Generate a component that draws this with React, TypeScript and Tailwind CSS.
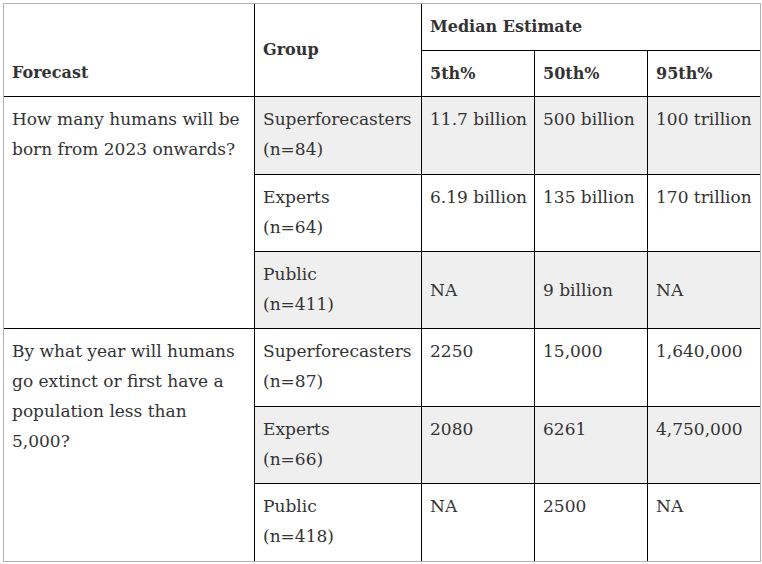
import React from "react";

const font = { fontFamily: '"DejaVu Serif", "Liberation Serif", serif' };

function Lines({ lines }: { lines: string[] }) {
  return (
    <div>
      {lines.map((l, i) => (
        <div key={i}>{l}</div>
      ))}
    </div>
  );
}

export default function App() {
  const B = "border-black";
  const gray = "bg-[#efefef]";
  const cellBase = "px-2 text-[#333] leading-[30px] whitespace-nowrap";
  const head = "text-[16px] font-bold";
  return (
    <div className="bg-white w-[762px] h-[564px] pl-[3px] pt-[3px]" style={font}>
      <div className="w-[758px] border border-[#b3b3b3] grid grid-cols-[251px_167px_113px_113px_112px] grid-rows-[47px_46px_78px_77px_77px_78px_77px_77px] text-[17px]">
        {/* header */}
        <div className={`${cellBase} ${head} col-start-1 row-start-1 row-span-2 border-r border-b ${B} flex items-end pb-[8px]`}>Forecast</div>
        <div className={`${cellBase} ${head} col-start-2 row-start-1 row-span-2 border-r border-b ${B} flex items-center`}>Group</div>
        <div className={`${cellBase} ${head} col-start-3 col-span-3 row-start-1 border-b ${B} flex items-center`}>Median Estimate</div>
        <div className={`${cellBase} ${head} col-start-3 row-start-2 border-r border-b ${B} flex items-center`}>5th%</div>
        <div className={`${cellBase} ${head} col-start-4 row-start-2 border-r border-b ${B} flex items-center`}>50th%</div>
        <div className={`${cellBase} ${head} col-start-5 row-start-2 border-b ${B} flex items-center`}>95th%</div>

        {/* question 1 */}
        <div className={`${cellBase} col-start-1 row-start-3 row-span-3 border-r border-b ${B} pt-[7px]`}>
          <Lines lines={["How many humans will be", "born from 2023 onwards?"]} />
        </div>
        <div className={`${cellBase} ${gray} col-start-2 row-start-3 border-r border-b ${B} pt-[7px]`}><Lines lines={["Superforecasters", "(n=84)"]} /></div>
        <div className={`${cellBase} ${gray} col-start-3 row-start-3 border-r border-b ${B} pt-[7px]`}>11.7 billion</div>
        <div className={`${cellBase} ${gray} col-start-4 row-start-3 border-r border-b ${B} pt-[7px]`}>500 billion</div>
        <div className={`${cellBase} ${gray} col-start-5 row-start-3 border-b ${B} pt-[7px]`}>100 trillion</div>

        <div className={`${cellBase} col-start-2 row-start-4 border-r border-b ${B} pt-[7px]`}><Lines lines={["Experts", "(n=64)"]} /></div>
        <div className={`${cellBase} col-start-3 row-start-4 border-r border-b ${B} pt-[7px]`}>6.19 billion</div>
        <div className={`${cellBase} col-start-4 row-start-4 border-r border-b ${B} pt-[7px]`}>135 billion</div>
        <div className={`${cellBase} col-start-5 row-start-4 border-b ${B} pt-[7px]`}>170 trillion</div>

        <div className={`${cellBase} ${gray} col-start-2 row-start-5 border-r border-b ${B} pt-[7px]`}><Lines lines={["Public", "(n=411)"]} /></div>
        <div className={`${cellBase} ${gray} col-start-3 row-start-5 border-r border-b ${B} flex items-center`}>NA</div>
        <div className={`${cellBase} ${gray} col-start-4 row-start-5 border-r border-b ${B} flex items-center`}>9 billion</div>
        <div className={`${cellBase} ${gray} col-start-5 row-start-5 border-b ${B} flex items-center`}>NA</div>

        {/* question 2 */}
        <div className={`${cellBase} col-start-1 row-start-6 row-span-3 border-r ${B} pt-[7px]`}>
          <Lines lines={["By what year will humans", "go extinct or first have a", "population less than", "5,000?"]} />
        </div>
        <div className={`${cellBase} col-start-2 row-start-6 border-r border-b ${B} pt-[7px]`}><Lines lines={["Superforecasters", "(n=87)"]} /></div>
        <div className={`${cellBase} col-start-3 row-start-6 border-r border-b ${B} pt-[7px]`}>2250</div>
        <div className={`${cellBase} col-start-4 row-start-6 border-r border-b ${B} pt-[7px]`}>15,000</div>
        <div className={`${cellBase} col-start-5 row-start-6 border-b ${B} pt-[7px]`}>1,640,000</div>

        <div className={`${cellBase} ${gray} col-start-2 row-start-7 border-r border-b ${B} pt-[7px]`}><Lines lines={["Experts", "(n=66)"]} /></div>
        <div className={`${cellBase} ${gray} col-start-3 row-start-7 border-r border-b ${B} pt-[7px]`}>2080</div>
        <div className={`${cellBase} ${gray} col-start-4 row-start-7 border-r border-b ${B} pt-[7px]`}>6261</div>
        <div className={`${cellBase} ${gray} col-start-5 row-start-7 border-b ${B} pt-[7px]`}>4,750,000</div>

        <div className={`${cellBase} col-start-2 row-start-8 border-r ${B} pt-[7px]`}><Lines lines={["Public", "(n=418)"]} /></div>
        <div className={`${cellBase} col-start-3 row-start-8 border-r ${B} pt-[7px]`}>NA</div>
        <div className={`${cellBase} col-start-4 row-start-8 border-r ${B} pt-[7px]`}>2500</div>
        <div className={`${cellBase} col-start-5 row-start-8 ${B} pt-[7px]`}>NA</div>
      </div>
    </div>
  );
}
